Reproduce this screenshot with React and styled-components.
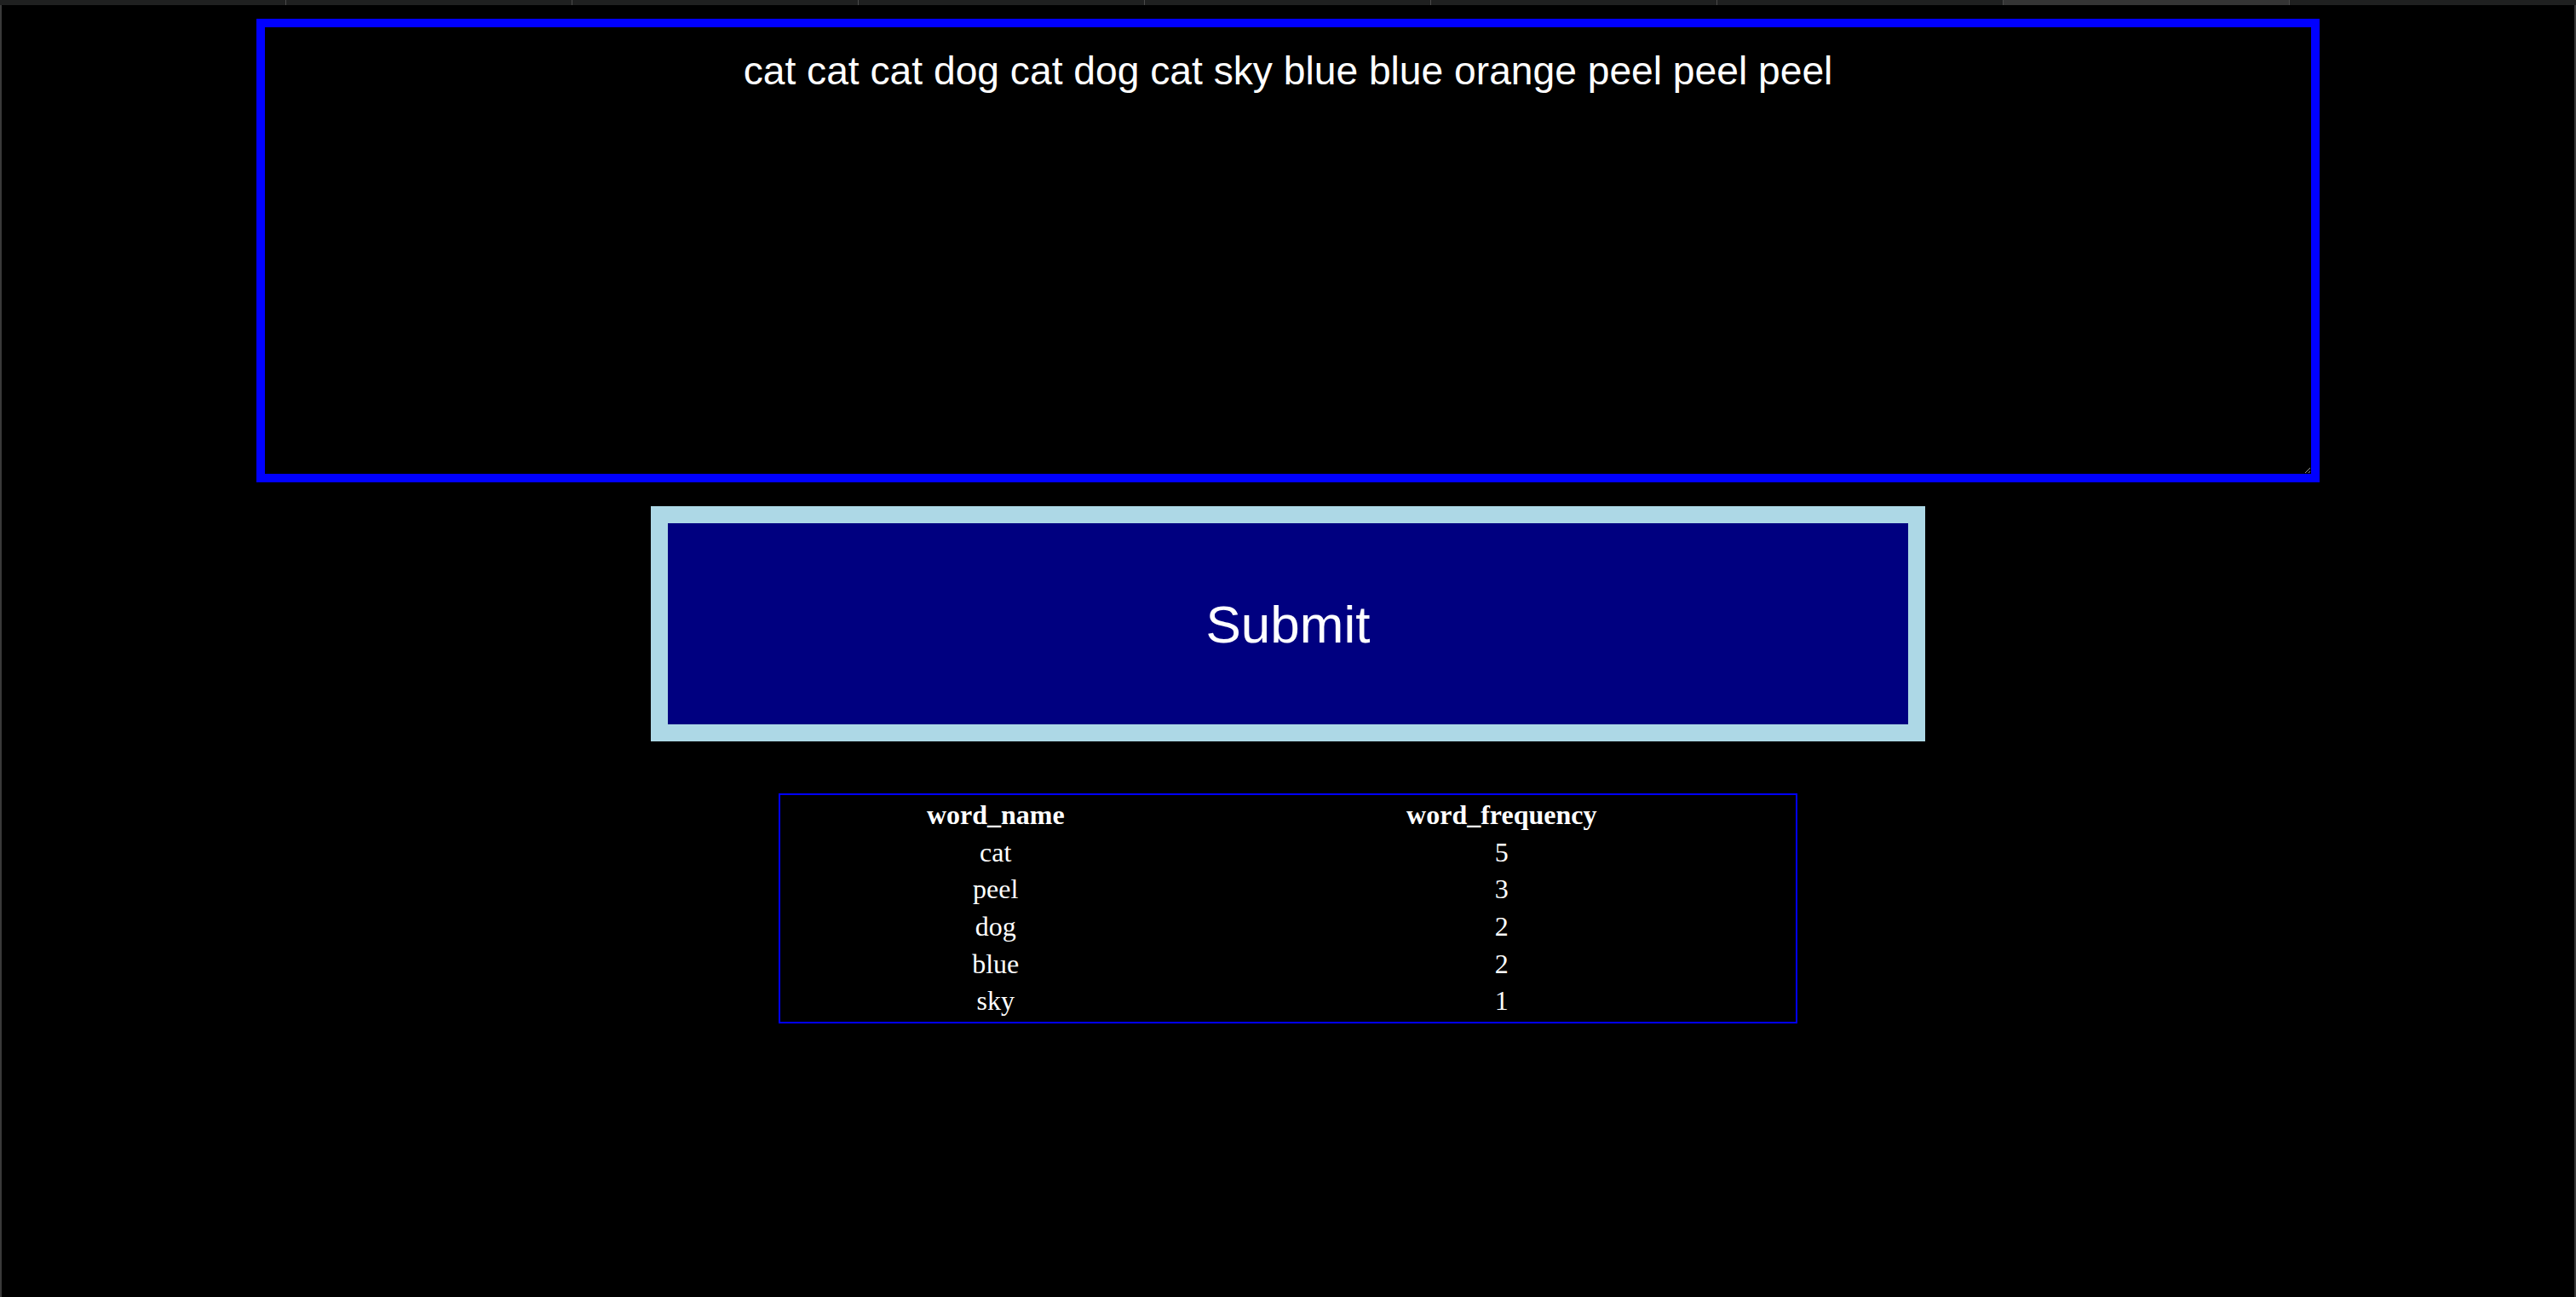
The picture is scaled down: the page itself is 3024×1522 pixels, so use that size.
import React from 'react'
import styled, { createGlobalStyle } from 'styled-components'

const GlobalStyle = createGlobalStyle`
  html, body {
    margin: 0;
    padding: 0;
    background: #000;
  }
`;

const Page = styled.div`
  min-height: 100vh;
  display: flex;
  flex-direction: column;
  background: #000;
`;

const TabStrip = styled.div`
  height: 6px;
  display: flex;
  background: #1f2020;
  flex: none;
`;

const Tab = styled.div`
  width: 336px;
  flex: none;
  box-sizing: border-box;
  border-right: 1px solid #4a4a4a;
  background: ${p => (p.$active ? '#353535' : '#1f2020')};
  &:last-child {
    border-right: none;
  }
`;

const Main = styled.div`
  flex: 1;
  border-left: 2px solid #3a3a3a;
  border-right: 2px solid #3a3a3a;
  display: flex;
  flex-direction: column;
  align-items: center;
  padding-top: 16px;
`;

const TextBox = styled.textarea`
  width: 2422px;
  height: 544px;
  box-sizing: border-box;
  margin: 0;
  padding: 24px 10px;
  border: 10px solid #0000ff;
  background: #000;
  color: #fff;
  font-family: "Liberation Sans", Arial, sans-serif;
  font-size: 46.2px;
  text-align: center;
  outline: none;
  resize: both;
`;

const SubmitButton = styled.button`
  margin-top: 28px;
  width: 1496px;
  height: 276px;
  box-sizing: border-box;
  border: 20px solid #add8e6;
  background: #000080;
  color: #fff;
  font-family: "Liberation Sans", Arial, sans-serif;
  font-size: 62px;
  cursor: pointer;
`;

const FreqTable = styled.table`
  margin-top: 61px;
  width: 1196px;
  border: 2px solid #0000ff;
  border-spacing: 4px;
  color: #fff;
  font-family: "Liberation Serif", "Times New Roman", serif;
  font-size: 32px;
  line-height: 35.66px;
`;

const Cell = styled.td`
  padding: 2px;
  text-align: center;
  font-weight: ${p => (p.$head ? 'bold' : 'normal')};
`;

const words = [
  { name: 'cat', count: 5 },
  { name: 'peel', count: 3 },
  { name: 'dog', count: 2 },
  { name: 'blue', count: 2 },
  { name: 'sky', count: 1 },
];

const App = () => {
  return (
    <Page>
      <GlobalStyle />
      <TabStrip>
        {Array.from({ length: 9 }).map((_, i) => (
          <Tab key={i} $active={i === 7} />
        ))}
      </TabStrip>
      <Main>
        <TextBox defaultValue="cat cat cat dog cat dog cat sky blue blue orange peel peel peel" />
        <SubmitButton>Submit</SubmitButton>
        <FreqTable>
          <tbody>
            <tr>
              <Cell as="th" $head>word_name</Cell>
              <Cell as="th" $head>word_frequency</Cell>
            </tr>
            {words.map(w => (
              <tr key={w.name}>
                <Cell>{w.name}</Cell>
                <Cell>{w.count}</Cell>
              </tr>
            ))}
          </tbody>
        </FreqTable>
      </Main>
    </Page>
  )
}

export default App
